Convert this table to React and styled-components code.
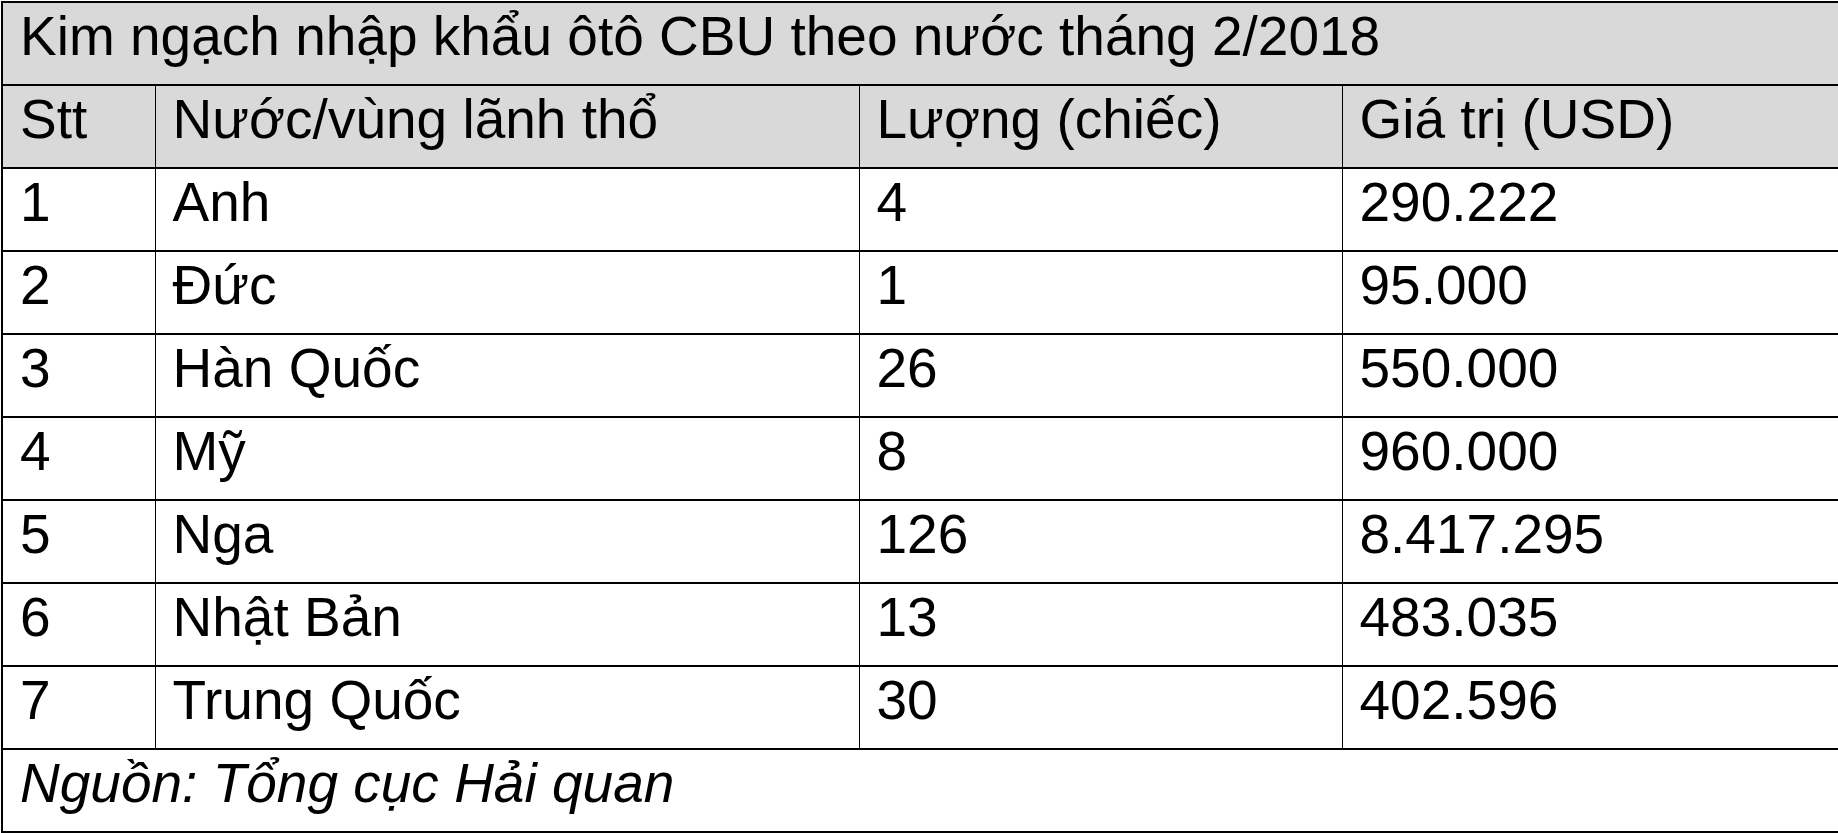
import React from 'react';
import styled, { createGlobalStyle } from 'styled-components';

const GlobalStyle = createGlobalStyle`
  html, body {
    margin: 0;
    padding: 0;
    background: #ffffff;
    overflow: hidden;
  }
  body {
    font-family: "Liberation Sans", Arial, sans-serif;
    color: #000;
  }
`;

const Wrap = styled.div`
  padding: 1px 0 0 1px;
`;

const Table = styled.table`
  border-collapse: collapse;
  table-layout: fixed;
  width: 1900px;
  font-size: 55px;
  line-height: 1.1;
`;

const Row = styled.tr`
  height: 83px;
  background: ${(p) => (p.$shaded ? '#d9d9d9' : '#ffffff')};
`;

const Cell = styled.td`
  border-top: 2px solid #000;
  border-bottom: 2px solid #000;
  border-left: 1px solid #000;
  border-right: 1px solid #000;
  padding: 0 16px 14px 17px;
  vertical-align: middle;
  white-space: nowrap;
  font-style: ${(p) => (p.$italic ? 'italic' : 'normal')};
  &:first-child {
    border-left: 2px solid #000;
  }
`;

const rows = [
  ['1', 'Anh', '4', '290.222'],
  ['2', 'Đức', '1', '95.000'],
  ['3', 'Hàn Quốc', '26', '550.000'],
  ['4', 'Mỹ', '8', '960.000'],
  ['5', 'Nga', '126', '8.417.295'],
  ['6', 'Nhật Bản', '13', '483.035'],
  ['7', 'Trung Quốc', '30', '402.596'],
];

export default function App() {
  return (
    <>
      <GlobalStyle />
      <Wrap>
        <Table>
          <colgroup>
            <col style={{ width: 153 }} />
            <col style={{ width: 704 }} />
            <col style={{ width: 483 }} />
            <col />
          </colgroup>
          <tbody>
            <Row $shaded>
              <Cell colSpan={4}>Kim ngạch nhập khẩu ôtô CBU theo nước tháng 2/2018</Cell>
            </Row>
            <Row $shaded>
              <Cell>Stt</Cell>
              <Cell>Nước/vùng lãnh thổ</Cell>
              <Cell>Lượng (chiếc)</Cell>
              <Cell>Giá trị (USD)</Cell>
            </Row>
            {rows.map((r) => (
              <Row key={r[0]}>
                {r.map((v, i) => (
                  <Cell key={i}>{v}</Cell>
                ))}
              </Row>
            ))}
            <Row>
              <Cell colSpan={4} $italic>Nguồn: Tổng cục Hải quan</Cell>
            </Row>
          </tbody>
        </Table>
      </Wrap>
    </>
  );
}
